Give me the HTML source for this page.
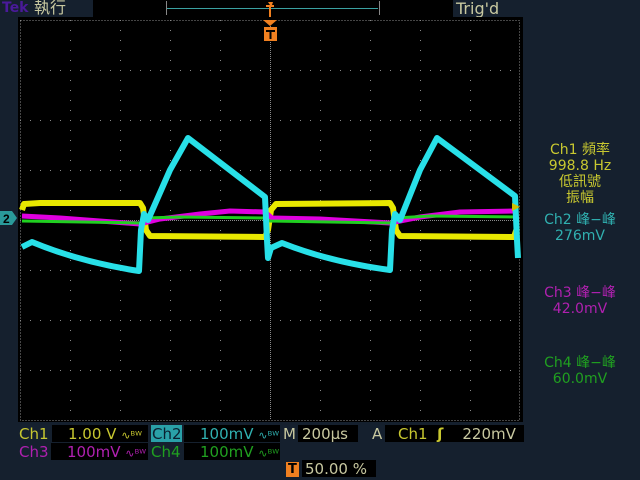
<!DOCTYPE html>
<html><head><meta charset="utf-8"><style>
body{margin:0;width:640px;height:480px;background:#15202e;overflow:hidden;position:relative;font-family:"DejaVu Sans","Noto Sans CJK TC",sans-serif}
.t{position:absolute;white-space:nowrap;font-size:15px;line-height:15px}
.box{position:absolute;background:#000;height:17px}
.r{position:absolute;left:525px;width:110px;text-align:center;font-size:14px;line-height:16px}
</style></head><body>
<div class="t" style="left:2px;top:1px;color:#4a1a9a;font-weight:bold;font-size:14px">Tek</div>
<div class="t" style="left:34px;top:0px;color:#c8c8a0;font-size:16px">執行</div>
<div class="box" style="left:93px;top:0;width:360px;height:17px"></div>
<div style="position:absolute;left:166px;top:1px;width:212px;height:14px;border-left:1px solid #888;border-right:1px solid #888"></div>
<div style="position:absolute;left:167px;top:8px;width:211px;height:1px;background:#3aa0a0"></div>
<div class="t" style="left:456px;top:1px;color:#c8c8a0;font-size:16px">Trig'd</div>
<div style="position:absolute;left:18px;top:17px;width:505px;height:405px;background:#000"></div>
<svg style="position:absolute;left:0;top:0" width="640" height="480">
<g stroke="#8a8a8a" stroke-width="1">
<rect x="20.5" y="20.5" width="499" height="400" fill="none" stroke-dasharray="1 2"/>
<g stroke-dasharray="1 9">
<path d="M70.5 20V420M120.5 20V420M170.5 20V420M220.5 20V420M320.5 20V420M370.5 20V420M420.5 20V420M470.5 20V420"/>
<path d="M20 70.5H520M20 120.5H520M20 170.5H520M20 270.5H520M20 320.5H520M20 370.5H520"/>
</g>
<path d="M270.5 20V420M20 220.5H520" stroke-dasharray="1 1"/>
</g>
<g fill="none" stroke-linejoin="round">
<polyline stroke="#e8e800" stroke-width="6" points="22,210 24,204 40,203 140,203 143,208 146,230 150,236 265,237 268,230 271,210 276,204 390,203 393,208 396,230 400,236 514,237 517,228"/>
<polyline stroke="#e000e0" stroke-width="5" points="22,216 60,218 140,224 160,219 200,214 230,211 265,212 272,218 320,219 390,223 420,217 460,212 515,211"/>
<polyline stroke="#20d020" stroke-width="3" points="22,221 140,223 145,218 180,217 265,218 270,221 390,223 396,218 430,216 515,217"/>
<path stroke="#28e0e8" stroke-width="6" d="M22 247L32 242Q80 262 139 271L141 230L144 214L148 220L170 170L188 138L265 197L267 240L268 258L271 248L282 243Q330 262 390 270L392 230L395 214L400 220L420 170L437 138L515 196L517 240L518 258"/>
</g>
<path d="M268 2h5l-1 3h-2zM266 5h8v2h-3v10h-2v-10h-3z" fill="#f08020"/>
<path d="M263 20h14l-7 6z" fill="#f08020"/>
<rect x="264" y="27" width="13" height="14" fill="#f08020"/>
<path d="M266 30h9v2h-3.5v7h-2v-7h-3.5z" fill="#000"/>
<path d="M0 211h12l5 7-5 7h-12z" fill="#2a9a9a"/>
<text x="3" y="223" font-family="Liberation Sans" font-size="12" font-weight="bold" fill="#000">2</text>
<path d="M512 203l8 4-8 4z" fill="#d0c000"/>
</svg>
<div class="r" style="top:142px;color:#c8c830">Ch1 頻率<br>998.8 Hz<br>低訊號<br>振幅</div>
<div class="r" style="top:212px;color:#30b0b0">Ch2 峰−峰<br>276mV</div>
<div class="r" style="top:285px;color:#b020b0">Ch3 峰−峰<br>42.0mV</div>
<div class="r" style="top:355px;color:#20a020">Ch4 峰−峰<br>60.0mV</div>

<div class="t" style="left:19px;top:427px;color:#c8c830">Ch1</div>
<div class="box" style="left:52px;top:425px;width:96px"></div>
<div class="t" style="left:68px;top:427px;color:#c8c830">1.00 V <span style="font-size:11px">∿ᴮᵂ</span></div>
<div style="position:absolute;left:151px;top:425px;width:31px;height:17px;background:#2aa0a8"></div>
<div class="t" style="left:152px;top:427px;color:#0a2030">Ch2</div>
<div class="box" style="left:184px;top:425px;width:96px"></div>
<div class="t" style="left:200px;top:427px;color:#30b0b0">100mV <span style="font-size:11px">∿ᴮᵂ</span></div>
<div class="t" style="left:283px;top:427px;color:#c8c8a0">M</div>
<div class="box" style="left:298px;top:425px;width:60px"></div>
<div class="t" style="left:302px;top:427px;color:#c8c8a0">200µs</div>
<div class="t" style="left:372px;top:427px;color:#c8c8a0">A</div>
<div class="box" style="left:385px;top:425px;width:139px"></div>
<div class="t" style="left:398px;top:427px;color:#c8c830">Ch1 &nbsp;<b>ʃ</b>&nbsp;&nbsp;&nbsp; <span style="color:#c8c8a0">220mV</span></div>

<div class="t" style="left:19px;top:445px;color:#b020b0">Ch3</div>
<div class="box" style="left:51px;top:443px;width:97px"></div>
<div class="t" style="left:67px;top:445px;color:#b020b0">100mV <span style="font-size:11px">∿ᴮᵂ</span></div>
<div class="t" style="left:151px;top:445px;color:#20a020">Ch4</div>
<div class="box" style="left:184px;top:443px;width:96px"></div>
<div class="t" style="left:200px;top:445px;color:#20a020">100mV <span style="font-size:11px">∿ᴮᵂ</span></div>

<div style="position:absolute;left:286px;top:462px;width:13px;height:15px;background:#f08020"></div>
<div class="t" style="left:288px;top:462px;color:#000;font-weight:bold;font-size:13px">T</div>
<div class="box" style="left:302px;top:460px;width:74px"></div>
<div class="t" style="left:305px;top:462px;color:#c8c8a0">50.00 %</div>
</body></html>
